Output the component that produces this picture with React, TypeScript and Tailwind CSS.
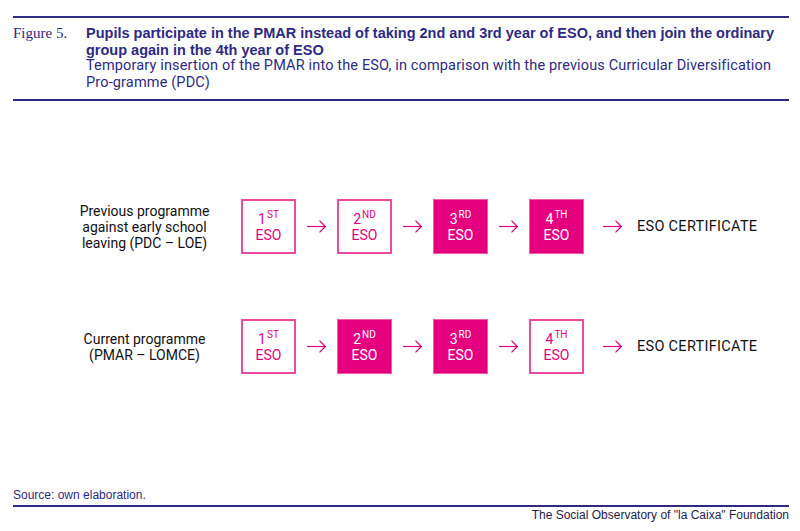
import React from "react";

const INDIGO = "text-[#2e2a82]";

type Step = { n: string; sup: string; filled: boolean };

const rows: { label: string[]; steps: Step[] }[] = [
  {
    label: ["Previous programme", "against early school", "leaving (PDC – LOE)"],
    steps: [
      { n: "1", sup: "ST", filled: false },
      { n: "2", sup: "ND", filled: false },
      { n: "3", sup: "RD", filled: true },
      { n: "4", sup: "TH", filled: true },
    ],
  },
  {
    label: ["Current programme", "(PMAR – LOMCE)"],
    steps: [
      { n: "1", sup: "ST", filled: false },
      { n: "2", sup: "ND", filled: true },
      { n: "3", sup: "RD", filled: true },
      { n: "4", sup: "TH", filled: false },
    ],
  },
];

function Arrow() {
  return (
    <svg width="19" height="13" viewBox="0 0 19 13" fill="none" className="shrink-0">
      <path d="M0 6.5H18.3" stroke="#e5007d" strokeWidth="1.2" />
      <path d="M12.5 0.7L18.3 6.5L12.5 12.3" stroke="#e5007d" strokeWidth="1.2" />
    </svg>
  );
}

function Box({ step }: { step: Step }) {
  return (
    <div
      className={
        step.filled
          ? "w-[55px] h-[55px] shrink-0 flex flex-col items-center justify-center bg-[#e5007d] border border-[#ee5aa8] text-white"
          : "w-[55px] h-[55px] shrink-0 flex flex-col items-center justify-center bg-white border-2 border-[#ec4a9c] text-[#e5007d]"
      }
    >
      <div className="text-[14px] leading-[16px] flex items-start">
        <span>{step.n}</span>
        <span className="text-[10px] leading-[10px] ml-[1px] -mt-[1px]">{step.sup}</span>
      </div>
      <div className="text-[14px] leading-[16px]">ESO</div>
    </div>
  );
}

export default function App() {
  return (
    <div className="w-[800px] h-[531px] bg-white flex flex-col pl-[13px] pr-[11px] pt-[16px] font-['Roboto',sans-serif] overflow-hidden">
      {/* Cabeçalho da figura */}
      <div className="border-t-2 border-b-2 border-[#2e2a82] flex pt-[7px] pb-[8px]">
        <div className={`w-[73px] shrink-0 font-['Liberation_Serif',serif] text-[15px] leading-[16.5px] ${INDIGO}`}>
          Figure 5.
        </div>
        <div className={`text-[14.5px] leading-[16.5px] ${INDIGO}`}>
          <p className="font-bold font-['Liberation_Sans',sans-serif]">
            Pupils participate in the PMAR instead of taking 2nd and 3rd year of ESO, and then join the ordinary
            <br />
            group again in the 4th year of ESO
          </p>
          <p className="tracking-[0.15px]">
            Temporary insertion of the PMAR into the ESO, in comparison with the previous Curricular Diversification
            <br />
            Pro-gramme (PDC)
          </p>
        </div>
      </div>

      {/* Diagrama */}
      <div className="flex-1 flex flex-col pt-[98px] gap-[65px]">
        {rows.map((row, i) => (
          <div key={i} className="flex items-center h-[55px]">
            <div className="w-[217px] shrink-0 pl-[46px] text-center text-[14px] leading-[16px] text-[#111]">
              {row.label.map((l) => (
                <div key={l}>{l}</div>
              ))}
            </div>
            <div className="ml-[11px] flex items-center">
              {row.steps.map((s, j) => (
                <React.Fragment key={j}>
                  <Box step={s} />
                  {j < 3 ? (
                    <div className="mx-[11px]">
                      <Arrow />
                    </div>
                  ) : (
                    <div className="ml-[19px] mr-[15px]">
                      <Arrow />
                    </div>
                  )}
                </React.Fragment>
              ))}
              <span className="text-[14.5px] tracking-[0.3px] text-[#111]">ESO CERTIFICATE</span>
            </div>
          </div>
        ))}
      </div>

      {/* Rodapé */}
      <div className="pb-[9px] font-['Liberation_Sans',sans-serif] text-[12px] leading-[14px]">
        <div className={`pb-[3px] ${INDIGO}`}>Source: own elaboration.</div>
        <div className="border-t-2 border-[#2e2a82] pt-[1px] text-right text-[#1d1c4a]">
          The Social Observatory of "la Caixa" Foundation
        </div>
      </div>
    </div>
  );
}
